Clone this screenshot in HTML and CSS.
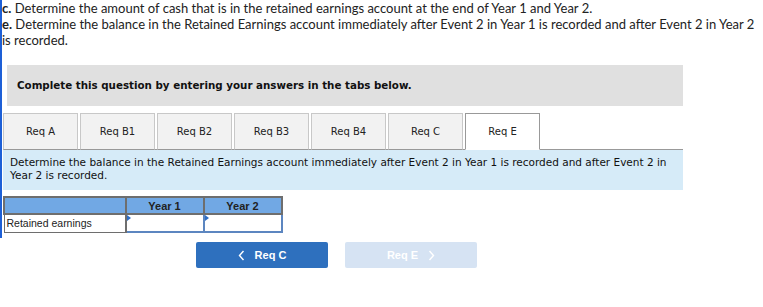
FILE: index.html
```html
<!DOCTYPE html>
<html lang="en">

<head>
    <meta charset="UTF-8">
    <meta name="viewport" content="width=device-width, initial-scale=1.0">
    <title>Retained earnings</title>
    <link rel="stylesheet" href="styles.css">
</head>

<body>

    <div class="page">
        <div class="prompts">
            <p><b>c.</b> Determine the amount of cash that is in the retained earnings account at the end of Year 1 and Year 2.</p>
            <p><b>e.</b> Determine the balance in the Retained Earnings account immediately after Event 2 in Year 1 is recorded and after Event 2 in Year 2 is recorded.</p>
        </div>

        <div class="notice">Complete this question by entering your answers in the tabs below.</div>

        <div class="tabs">
            <button class="tab">Req A</button>
            <button class="tab">Req B1</button>
            <button class="tab">Req B2</button>
            <button class="tab">Req B3</button>
            <button class="tab">Req B4</button>
            <button class="tab">Req C</button>
            <button class="tab active">Req E</button>
        </div>

        <div class="req-text">
            Determine the balance in the Retained Earnings account immediately after Event 2 in Year 1 is recorded and after Event 2 in Year 2 is recorded.
        </div>

        <table class="answer">
            <tr>
                <th class="label-col"></th>
                <th>Year 1</th>
                <th>Year 2</th>
            </tr>
            <tr>
                <td class="label-col">Retained earnings</td>
                <td class="entry"><input type="text"></td>
                <td class="entry"><input type="text"></td>
            </tr>
        </table>
    </div>

    <div class="nav">
        <button class="nav-btn prev">
            <svg class="chev" width="7" height="11" viewBox="0 0 7 11"><path d="M5.5 1 L1.5 5.5 L5.5 10" fill="none" stroke="#fff" stroke-width="1.4"/></svg>
            Req C
        </button>
        <button class="nav-btn next" disabled>
            Req E
            <svg class="chev" width="7" height="11" viewBox="0 0 7 11"><path d="M1.5 1 L5.5 5.5 L1.5 10" fill="none" stroke="#fff" stroke-width="1.4"/></svg>
        </button>
    </div>

</body>

</html>
```

FILE: styles.css
```css
body {
    margin: 0;
    background-color: #fff;
    font-family: "Liberation Sans", Arial, sans-serif;
    color: #222;
}

.page {
    width: 756px;
    border-left: 2px solid #1d5fd6;
    padding-bottom: 5px;
}

.prompts {
    font-family: Lato, "Liberation Sans", sans-serif;
    font-size: 13px;
    line-height: 16px;
    color: #222;
}

.prompts p {
    margin: 0;
}

.notice {
    width: 666px;
    margin: 17px 0 0 5px;
    height: 41px;
    line-height: 41px;
    padding-left: 10px;
    background-color: #e0e0e0;
    font-family: "DejaVu Sans", Verdana, sans-serif;
    font-weight: bold;
    font-size: 10.3px;
    color: #111;
}

.tabs {
    width: 680px;
    display: flex;
    gap: 2px;
    margin: 7px 0 0 1px;
    border-bottom: 1px solid #999;
}

.tab {
    width: 75px;
    height: 37px;
    margin-bottom: -1px;
    background-color: #f2f2f2;
    border: 1px solid #c8c8c8;
    border-bottom: 1px solid #999;
    font-family: "DejaVu Sans", Verdana, sans-serif;
    font-size: 10px;
    color: #222;
    padding: 0;
}

.tab.active {
    background-color: #fff;
    border-color: #999;
    border-bottom-color: #fff;
}

.req-text {
    width: 666px;
    margin-left: 1px;
    background-color: #d6ebf8;
    padding: 6px 7px 8px 7px;
    font-family: "DejaVu Sans", Verdana, sans-serif;
    font-size: 10.5px;
    line-height: 13px;
    color: #111;
}

.answer {
    margin: 6px 0 0 1px;
    border-collapse: collapse;
    font-size: 10.5px;
}

.answer th,
.answer td {
    border: 2px solid #6e6e6e;
    padding: 0;
}

.answer th {
    height: 15px;
    background-color: #71a8e4;
    font-weight: bold;
    font-size: 11px;
    color: #222;
    width: 76px;
}

.answer th.label-col,
.answer td.label-col {
    width: 118px;
}

.answer td {
    height: 16px;
    background-color: #fff;
}

.answer td.label-col {
    border-width: 1px 2px 1px 1px;
    padding-left: 2px;
    text-align: left;
}

.answer td.entry {
    position: relative;
    border-color: #5c86c0;
}

.answer td.entry::before {
    content: "";
    position: absolute;
    left: 0;
    top: 0;
    border-top: 3px solid transparent;
    border-bottom: 3px solid transparent;
    border-left: 4px solid #2d6ec6;
}

.entry input {
    width: 100%;
    height: 16px;
    border: 0;
    padding: 0;
    box-sizing: border-box;
    background: transparent;
}

.nav {
    display: flex;
    gap: 17px;
    margin: 4px 0 0 196px;
}

.nav-btn {
    display: flex;
    align-items: center;
    justify-content: center;
    gap: 10px;
    width: 132px;
    height: 26px;
    border: 0;
    border-radius: 2px;
    color: #fff;
    font-family: "Liberation Sans", Arial, sans-serif;
    font-weight: bold;
    font-size: 11px;
    padding: 0;
}

.prev {
    background-color: #2e70be;
}

.next {
    background-color: #d6e3f3;
}
```
